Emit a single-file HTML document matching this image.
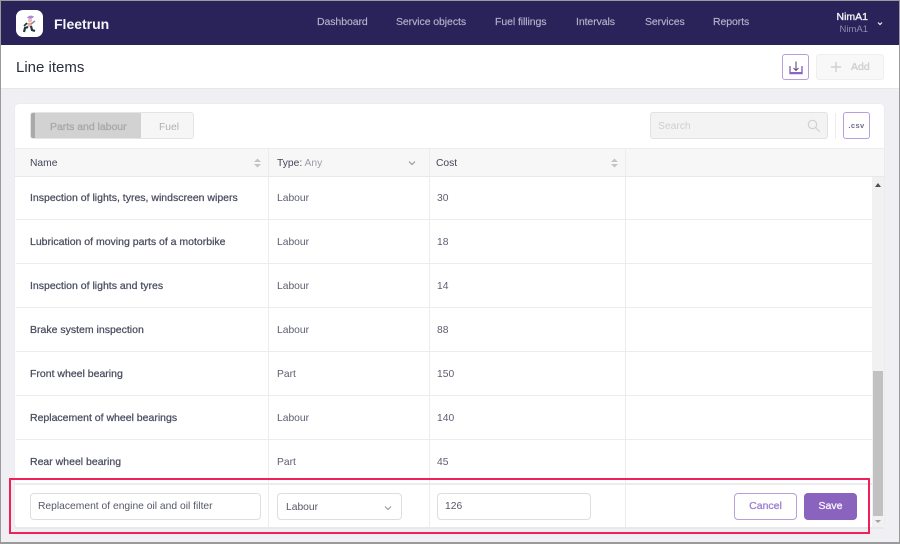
<!DOCTYPE html>
<html><head><meta charset="utf-8">
<style>
*{box-sizing:border-box;margin:0;padding:0}
html,body{width:900px;height:544px;overflow:hidden;background:#efeff4;font-family:"Liberation Sans",sans-serif}
.a{position:absolute;white-space:nowrap}
.m{-webkit-text-stroke:.35px currentColor}
#f{position:absolute;left:0;top:0;width:900px;height:544px;border:1px solid #9a9a9a;border-bottom:2px solid #9a9a9a;z-index:20;pointer-events:none}
.nav{top:16px;font-size:10.5px;line-height:13px;color:#b4b2cc;letter-spacing:-.08px;-webkit-text-stroke:.15px currentColor}
.n{left:30px;font-size:10.5px;color:#4a4d60;line-height:14px;-webkit-text-stroke:.25px currentColor}
.t{left:277px;font-size:10.3px;color:#5c5f70;line-height:14px;margin-top:1px}
.c{left:437px;font-size:10.3px;color:#5c5f70;line-height:14px;margin-top:1px}
.h{position:absolute;left:16px;width:856px;height:1px;background:#ececee}
.v{position:absolute;top:149px;width:1px;height:379px;background:#ececee}
.th{font-size:10.3px;color:#44475a;top:157px;line-height:14px}
</style></head><body>
<div class="a" style="left:0;top:0;width:900px;height:45px;background:#2a235a"></div>
<div class="a" style="left:16px;top:10px;width:27px;height:27px;background:#fff;border-radius:7px"></div>
<svg class="a" style="left:19px;top:13px" width="21" height="21" viewBox="0 0 21 21">
<path d="M8 5c1-3 6-3 7-1l-3 2z" fill="#a58bdc"/><circle cx="11" cy="7.500" r="2" fill="#f2b9ae"/>
<path d="M8 10l4 0 1 3-4 1z" fill="#f0a9a0"/><path d="M9 14l-3 1-1 4M12 13l1 4 3 1" stroke="#1f3a3d" stroke-width="2.200" fill="none"/>
<path d="M8 10l-3 3" stroke="#1f3a3d" stroke-width="1.600"/><path d="M12 11l4-3" stroke="#8a8a9a" stroke-width="1.500"/></svg>
<div class="a" style="left:54px;top:15px;font-size:14px;line-height:18px;font-weight:bold;color:#f4f4fa">Fleetrun</div>
<div class="a nav" style="left:317px">Dashboard</div>
<div class="a nav" style="left:396px">Service objects</div>
<div class="a nav" style="left:495px">Fuel fillings</div>
<div class="a nav" style="left:576px">Intervals</div>
<div class="a nav" style="left:645px">Services</div>
<div class="a nav" style="left:713px">Reports</div>
<div class="a m" style="right:32px;top:11px;font-size:10.500px;line-height:13px;color:#f0f0f8">NimA1</div>
<div class="a" style="right:32px;top:23px;font-size:9.500px;line-height:13px;color:#8f8cae">NimA1</div>
<svg class="a" style="left:876px;top:21px" width="8" height="6"><path d="M2 1.500L4 3.500 6 1.500" stroke="#eee" stroke-width="1.200" fill="none"/></svg>

<div class="a" style="left:0;top:45px;width:900px;height:44px;background:#fff;border-bottom:1px solid #e6e6ec"></div>
<div class="a" style="left:16px;top:59px;font-size:15px;line-height:18px;color:#2b2e3d">Line items</div>
<div class="a" style="left:782px;top:54px;width:27px;height:26px;border:1px solid #b79fdd;border-radius:3px;background:#fff"></div>
<svg class="a" style="left:789px;top:60px" width="14" height="15" viewBox="0 0 14 15"><path d="M1 6v7.500h12V6" stroke="#8a63c4" stroke-width="1.400" fill="none"/><path d="M1 13h12" stroke="#8a63c4" stroke-width="2"/><path d="M7 1.500v9M4.500 8l2.500 2.500L9.500 8" stroke="#5d5080" stroke-width="1.100" fill="none"/></svg>
<div class="a" style="left:816px;top:54px;width:68px;height:26px;background:#f8f8f8;border:1px solid #efefef;border-radius:3px"></div>
<svg class="a" style="left:830px;top:61px" width="12" height="12"><path d="M6 1v10M1 6h10" stroke="#d0d0d0" stroke-width="1.400"/></svg>
<div class="a m" style="left:851px;top:60px;font-size:10.500px;line-height:14px;color:#cfcfcf">Add</div>

<div class="a" style="left:15px;top:104px;width:869px;height:424px;background:#fff;border-radius:4px;box-shadow:0 0 1px #ddd"></div>
<div class="a" style="left:30px;top:112px;width:164px;height:27px;background:#f6f6f6;border:1px solid #e4e4e4;border-radius:3px"></div>
<div class="a" style="left:31px;top:113px;width:110px;height:25px;background:#d2d2d2;border-left:4px solid #a9a9a9;border-radius:2px 0 0 2px"></div>
<div class="a m" style="left:50px;top:120px;font-size:10.500px;line-height:14px;letter-spacing:-.03px;color:#a9a9a9">Parts and labour</div>
<div class="a" style="left:159px;top:121px;font-size:10.300px;line-height:14px;color:#b0b0b0">Fuel</div>
<div class="a" style="left:650px;top:112px;width:178px;height:27px;background:#f3f3f3;border:1px solid #e2e2e2;border-radius:3px"></div>
<div class="a" style="left:658px;top:120px;font-size:10.300px;line-height:14px;color:#cfcfcf">Search</div>
<svg class="a" style="left:807px;top:119px" width="14" height="14"><circle cx="5.500" cy="5.500" r="4.200" stroke="#d0d0d0" stroke-width="1.200" fill="none"/><path d="M8.500 8.500l4.300 4.300" stroke="#d0d0d0" stroke-width="1.200"/></svg>
<div class="a" style="left:835px;top:113px;width:1px;height:26px;background:#ececec"></div>
<div class="a" style="left:843px;top:112px;width:27px;height:27px;border:1px solid #b79fdd;border-radius:3px;background:#fff;text-align:center;font-size:7.500px;line-height:25px;font-weight:bold;color:#6f6a8a;letter-spacing:.4px">.csv</div>

<div class="a" style="left:15px;top:148px;width:869px;height:29px;background:#f7f7f7;border-top:1px solid #ececee;border-bottom:1px solid #e8e8ea"></div>
<div class="a th" style="left:30px">Name</div>
<div class="a th" style="left:277px">Type: <span style="color:#9a9ca8">Any</span></div>
<div class="a th" style="left:436px">Cost</div>
<svg class="a" style="left:253px;top:158px" width="9" height="10"><path d="M4.500 0.500L8 4H1zM4.500 9.500L8 6H1z" fill="#c4c4c8"/></svg>
<svg class="a" style="left:610px;top:158px" width="9" height="10"><path d="M4.500 0.500L8 4H1zM4.500 9.500L8 6H1z" fill="#c4c4c8"/></svg>
<svg class="a" style="left:408px;top:160px" width="8" height="6"><path d="M1 1.500L4 4.500 7 1.500" stroke="#8f919c" stroke-width="1" fill="none"/></svg>

<div class="h" style="top:219px"></div><div class="h" style="top:263px"></div><div class="h" style="top:307px"></div><div class="h" style="top:351px"></div><div class="h" style="top:395px"></div><div class="h" style="top:439px"></div><div class="h" style="top:483px;height:2px;left:15px;width:869px"></div>
<div class="h" style="top:527px;height:2px;left:15px;width:869px;background:#e8e8ea"></div>
<div class="v" style="left:268px"></div><div class="v" style="left:429px"></div><div class="v" style="left:625px"></div>

<div class="a n" style="top:191px">Inspection of lights, tyres, windscreen wipers</div><div class="a t" style="top:191px">Labour</div><div class="a c" style="top:191px">30</div>
<div class="a n" style="top:235px">Lubrication of moving parts of a motorbike</div><div class="a t" style="top:235px">Labour</div><div class="a c" style="top:235px">18</div>
<div class="a n" style="top:279px">Inspection of lights and tyres</div><div class="a t" style="top:279px">Labour</div><div class="a c" style="top:279px">14</div>
<div class="a n" style="top:323px">Brake system inspection</div><div class="a t" style="top:323px">Labour</div><div class="a c" style="top:323px">88</div>
<div class="a n" style="top:367px">Front wheel bearing</div><div class="a t" style="top:367px">Part</div><div class="a c" style="top:367px">150</div>
<div class="a n" style="top:411px">Replacement of wheel bearings</div><div class="a t" style="top:411px">Labour</div><div class="a c" style="top:411px">140</div>
<div class="a n" style="top:455px">Rear wheel bearing</div><div class="a t" style="top:455px">Part</div><div class="a c" style="top:455px">45</div>

<div class="a" style="left:872px;top:177px;width:12px;height:350px;background:#f1f1f1"></div>
<div class="a" style="left:873px;top:371px;width:10px;height:145px;background:#c1c1c1"></div>
<svg class="a" style="left:874px;top:182px" width="8" height="6"><path d="M4 1L7 5H1z" fill="#505050"/></svg>
<svg class="a" style="left:874px;top:519px" width="8" height="5"><path d="M4 4L7 1H1z" fill="#a3a3a3"/></svg>

<div class="a" style="left:30px;top:493px;width:231px;height:27px;border:1px solid #dedee2;border-radius:4px;background:#fff;padding-left:7px;font-size:10.300px;line-height:26px;color:#555869">Replacement of engine oil and oil filter</div>
<div class="a" style="left:277px;top:493px;width:125px;height:27px;border:1px solid #dedee2;border-radius:4px;background:#fff;padding-left:8px;font-size:10.300px;line-height:28px;color:#555869">Labour</div>
<svg class="a" style="left:384px;top:505px" width="8" height="6"><path d="M1 1.500L4 4.500 7 1.500" stroke="#8f919c" stroke-width="1" fill="none"/></svg>
<div class="a" style="left:437px;top:493px;width:154px;height:27px;border:1px solid #dedee2;border-radius:4px;background:#fff;padding-left:7px;font-size:10.300px;line-height:26px;color:#555869">126</div>
<div class="a m" style="left:734px;top:493px;width:63px;height:27px;border:1px solid #b79fdd;border-radius:4px;background:#fff;text-align:center;font-size:10.500px;line-height:25px;color:#a184d2">Cancel</div>
<div class="a m" style="left:804px;top:493px;width:53px;height:27px;border-radius:4px;background:#8a63bf;text-align:center;font-size:10.500px;line-height:27px;color:#f5f0fb">Save</div>

<div class="a" style="left:9px;top:478px;width:861px;height:56px;border:2px solid #f0205a;z-index:10"></div>
<div id="f"></div>
</body></html>
